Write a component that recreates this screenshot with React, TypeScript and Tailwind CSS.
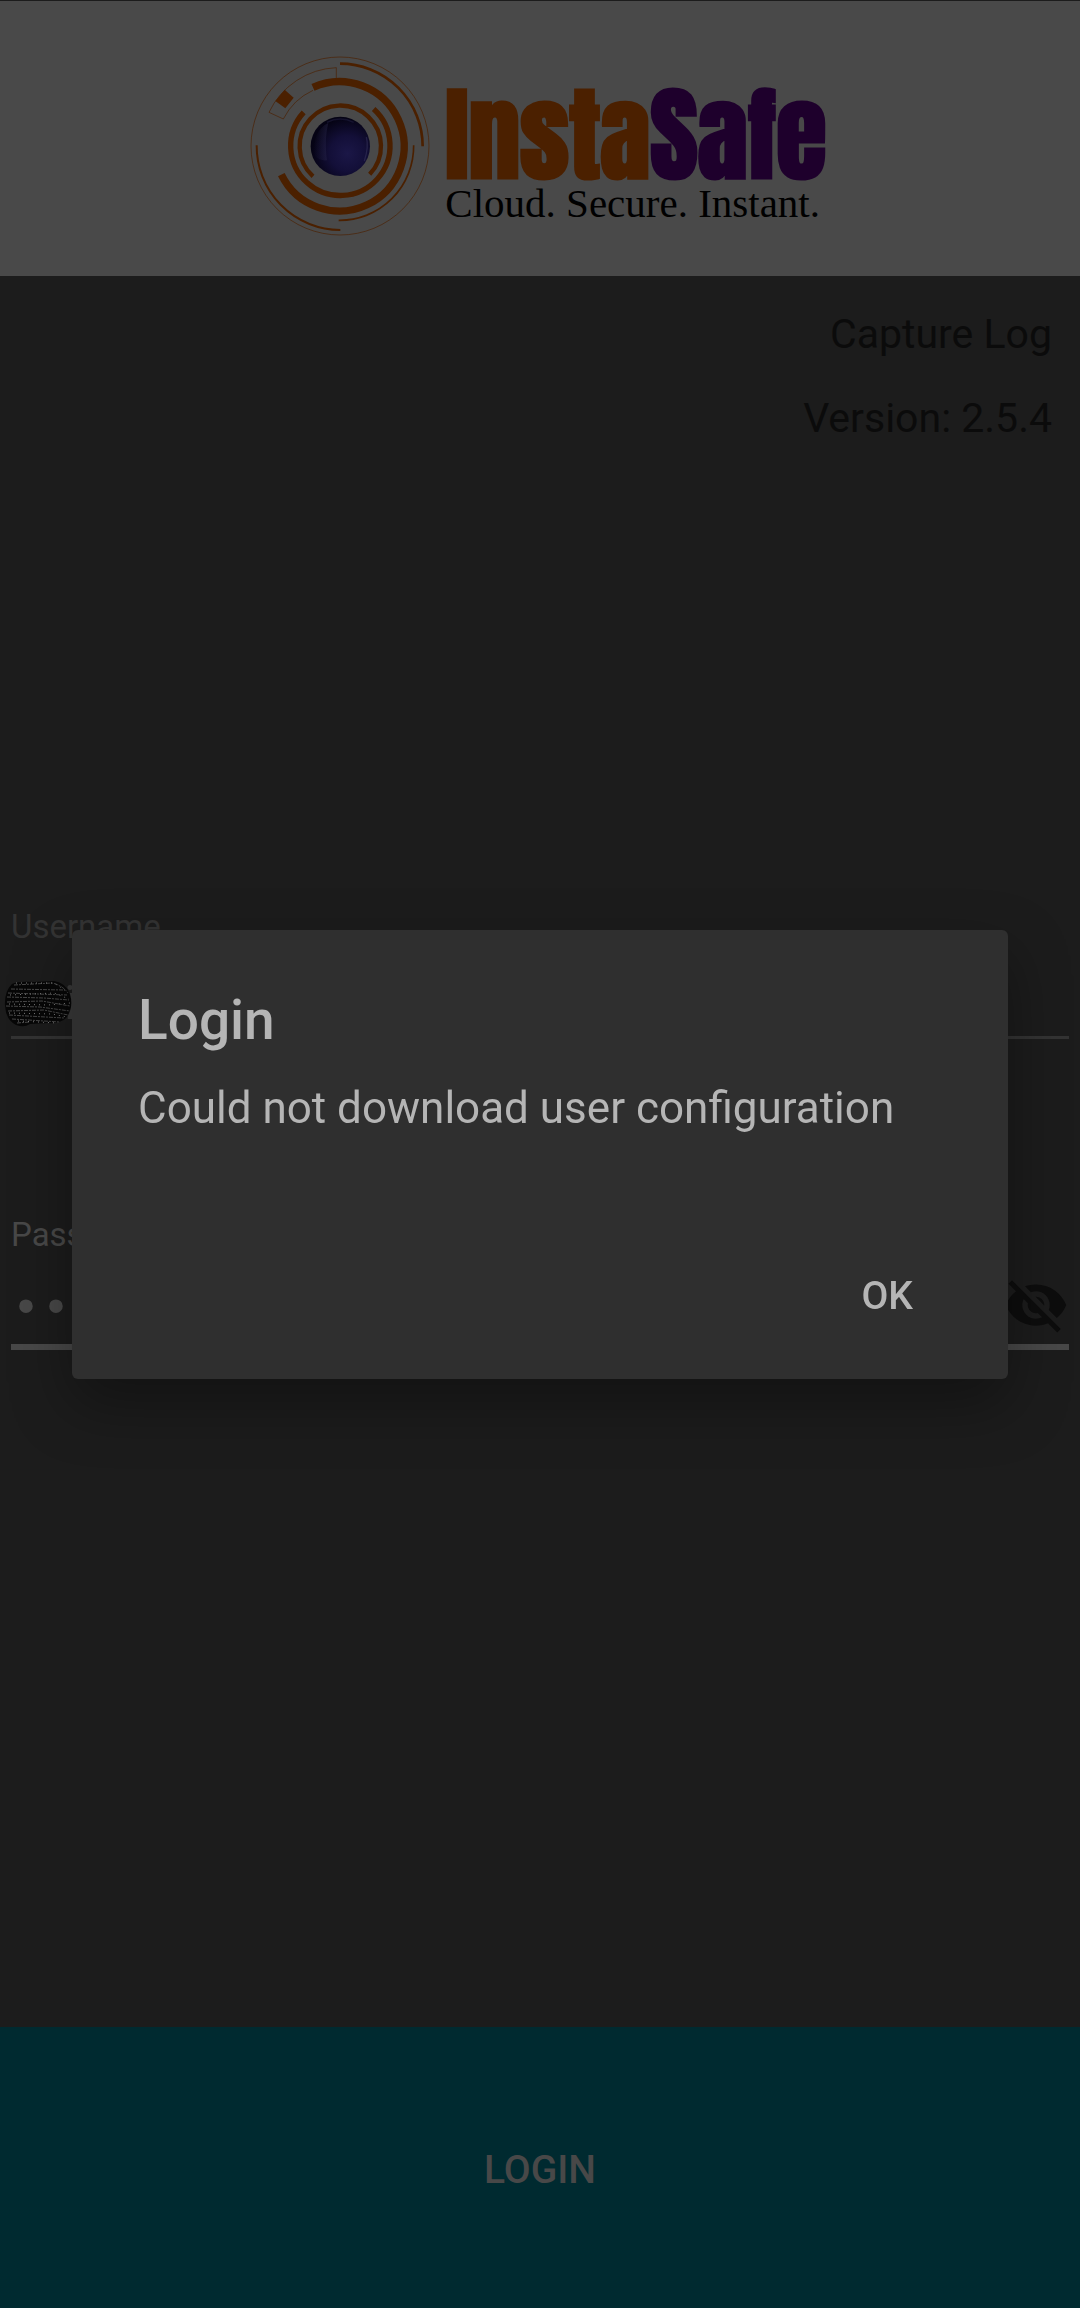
import { MdVisibilityOff } from "react-icons/md";

function LogoMark() {
  return (
    <svg viewBox="28 44 546 546" className="size-[182px] shrink-0" fill="none" stroke="#4b2000" aria-hidden="true">
      <defs>
        <radialGradient id="ball" cx="0.62" cy="0.62" r="0.6">
          <stop offset="0" stopColor="#1b1747" />
          <stop offset="0.5" stopColor="#130f38" />
          <stop offset="1" stopColor="#050314" />
        </radialGradient>
        <linearGradient id="shine" x1="0" y1="0" x2="1" y2="0">
          <stop offset="0" stopColor="#2c2a50" stopOpacity="0" />
          <stop offset="1" stopColor="#2f2d52" stopOpacity="0.4" />
        </linearGradient>
      </defs>
      <circle cx="301" cy="317" r="267" strokeWidth="2" />
      <path d="M301 70A248 248 0 0 1 549 318" strokeWidth="8" />
      <path d="M51 315A252 252 0 0 0 302 569" strokeWidth="6" />
      <path d="M522 315A222 223 0 0 1 297 540" strokeWidth="5" />
      <path d="M220 141A194 194 0 1 1 125 403" strokeWidth="22" />
      <path d="M192 216A149 149 0 1 0 402 206" strokeWidth="16" />
      <path d="M220 408A122 122 0 1 1 390 402" strokeWidth="13" />
      <path d="M290 113V82A235 235 0 0 0 88 216L131 236A188 188 0 0 1 220 150" strokeWidth="2" />
      <path d="M135 148L162 172L137 204L107 182Z" fill="#4b2000" stroke="none" />
      <circle cx="302" cy="318" r="89" fill="url(#ball)" stroke="none" />
      <path d="M266 248C235 262 217 300 224 345C236 358 250 362 262 360C257 320 257 285 266 248Z" fill="url(#shine)" stroke="none" />
      <path d="M262 246Q302 226 342 246" stroke="#2a2750" strokeWidth="4" opacity="0.4" />
      <path d="M380 290Q388 320 374 362" stroke="#34315a" strokeWidth="4" opacity="0.6" />
    </svg>
  );
}

function Scribble() {
  return (
    <svg viewBox="0 0 68 48" className="absolute top-1.5 left-1 h-12 w-[68px]" fill="none" aria-hidden="true">
      <path d="M8 4Q14 1 30 2L50 1Q62 3 66 14Q70 28 62 38Q56 44 44 43L26 44Q20 48 12 45Q2 40 1 26Q0 12 8 4Z" fill="#070707" />
      <g stroke="#484848" strokeWidth="1" strokeDasharray="4 1 2 1">
        <path d="M10 5L48 3Q58 5 64 13M7 9L60 10M4 13L63 15M3 17L40 18L65 20M3 22L38 21L66 26M2 26L36 27L66 31M4 31L40 30L64 35M5 35L60 38M8 39L56 42M13 43L26 42" />
      </g>
      <g stroke="#7c7c7c" strokeWidth="1" strokeDasharray="1 4">
        <path d="M12 3H50L62 11M6 15L50 13L65 19M5 24L44 25L66 23M5 33L48 34L63 37M14 41L54 43" />
      </g>
    </svg>
  );
}

export default function App() {
  return (
    <div className="flex min-h-screen flex-col bg-[#1c1c1c] font-['Roboto',sans-serif]">
      <header className="flex h-[276px] items-center justify-center gap-3.5 border-t border-[#1c1c1c] bg-[#494949] pt-3.5 pr-1">
        <LogoMark />
        <div className="flex flex-col pt-[22px]">
          <div className="font-['Impact','Anton','Liberation_Sans',sans-serif] text-[103px] leading-[92px] font-bold text-[#4b2000]">
            Insta<span className="text-[#1e002c]">Safe</span>
          </div>
          <div className="font-['Liberation_Serif',serif] text-[41px] leading-[44px] text-black">Cloud. Secure. Instant.</div>
        </div>
      </header>

      <div className="flex flex-col items-end gap-9 px-7 pt-[34px] text-[41px] leading-[48px] text-[#0b0b0b]">
        <button type="button">Capture Log</button>
        <p>Version: 2.5.4</p>
      </div>

      <form className="mt-[465px] flex flex-1 flex-col" onSubmit={(e) => e.preventDefault()}>
        <div className="mx-[11px] flex flex-col">
          <label htmlFor="username" className="text-[33px] leading-10 text-[#333333]">Username</label>
          <div className="relative -mx-[11px] mt-[27px] px-[11px]">
            <input id="username" defaultValue="i" className="h-[65px] w-full border-b-3 border-[#333333] bg-transparent pb-1 pl-[53px] text-[49px] text-[#3a3a3a] outline-none" />
            <Scribble />
          </div>
        </div>
        <div className="mx-[11px] mt-[176px] flex flex-col">
          <label htmlFor="password" className="text-[33px] leading-10 text-[#484848]">Password</label>
          <div className="mt-[15px] flex h-[80px] items-center border-b-6 border-[#484848]">
            <input id="password" type="password" defaultValue="password" className="min-w-0 flex-1 bg-transparent pt-1 font-['Liberation_Mono',monospace] text-[50px] text-[#484848] outline-none" />
            <button type="button" aria-label="Show password" className="pb-1 text-[#0d0d0d]">
              <MdVisibilityOff className="size-[66px]" />
            </button>
          </div>
        </div>
        <button type="submit" className="mt-auto h-[281px] w-full bg-[#002a30] pt-[5px] text-[39px] font-medium text-[#484848]">LOGIN</button>
      </form>

      <div className="fixed inset-0 flex items-center justify-center px-[72px]">
        <div role="dialog" aria-modal="true" aria-labelledby="title" className="flex w-full flex-col rounded-md bg-[#2f2f2f] px-[66px] pt-[58px] pb-[41px] text-[#b5b5b5] shadow-[0_24px_60px_rgba(0,0,0,0.35)]">
          <h1 id="title" className="text-[55px] leading-[64px] font-medium">Login</h1>
          <p className="mt-[30px] text-[44px] leading-[52px]">Could not download user configuration</p>
          <button type="button" className="mt-[120px] self-end px-[29px] py-[18px] text-[39px] leading-[48px] font-medium">OK</button>
        </div>
      </div>
    </div>
  );
}
